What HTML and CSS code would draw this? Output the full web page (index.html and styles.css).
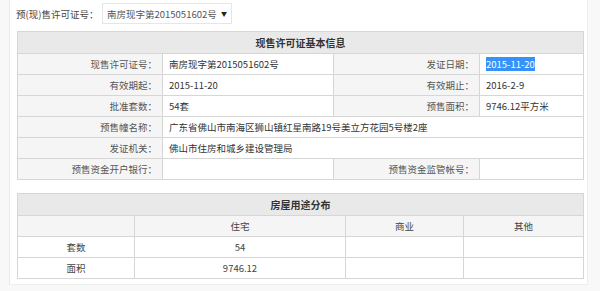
FILE: index.html
```html
<!DOCTYPE html>
<html lang="zh-CN">
<head>
<meta charset="utf-8">
<title>现售许可证基本信息</title>
<link rel="stylesheet" href="styles.css">
</head>
<body>
<div class="card">
  <div class="picker">
    <span class="picker-label">预(现)售许可证号：</span>
    <span class="select"><span class="select-text">南房现字第2015051602号</span><span class="arrow">▼</span></span>
  </div>

  <table class="grid info">
    <colgroup>
      <col class="c1"><col class="c2"><col class="c3"><col class="c4">
    </colgroup>
    <tr class="head"><th colspan="4">现售许可证基本信息</th></tr>
    <tr>
      <td class="lbl">现售许可证号：</td><td class="val">南房现字第2015051602号</td>
      <td class="lbl">发证日期：</td><td class="val"><span class="sel">2015-11-20</span></td>
    </tr>
    <tr>
      <td class="lbl">有效期起：</td><td class="val">2015-11-20</td>
      <td class="lbl">有效期止：</td><td class="val">2016-2-9</td>
    </tr>
    <tr>
      <td class="lbl">批准套数：</td><td class="val">54套</td>
      <td class="lbl">预售面积：</td><td class="val">9746.12平方米</td>
    </tr>
    <tr>
      <td class="lbl">预售幢名称：</td><td class="val" colspan="3">广东省佛山市南海区狮山镇红星南路19号美立方花园5号楼2座</td>
    </tr>
    <tr>
      <td class="lbl">发证机关：</td><td class="val" colspan="3">佛山市住房和城乡建设管理局</td>
    </tr>
    <tr>
      <td class="lbl">预售资金开户银行：</td><td class="val"></td>
      <td class="lbl">预售资金监管帐号：</td><td class="val"></td>
    </tr>
  </table>

  <table class="grid usage">
    <colgroup>
      <col class="u1"><col class="u2"><col class="u3"><col class="u4">
    </colgroup>
    <tr class="head"><th colspan="4">房屋用途分布</th></tr>
    <tr class="sub">
      <td></td><td>住宅</td><td>商业</td><td>其他</td>
    </tr>
    <tr>
      <td>套数</td><td>54</td><td></td><td></td>
    </tr>
    <tr>
      <td>面积</td><td>9746.12</td><td></td><td></td>
    </tr>
  </table>
</div>
</body>
</html>
```

FILE: styles.css
```css
html, body {
  margin: 0;
  padding: 0;
}
body {
  background: #f8f8f8;
  font-family: "Noto Sans CJK SC", "Noto Sans", sans-serif;
  font-size: 9.5px;
  color: #333;
  height: 291px;
  overflow: hidden;
}
.card {
  margin-left: 9px;
  width: 579px;
  height: 285px;
  box-sizing: border-box;
  background: #fff;
  border-left: 1px solid #e9e9e9;
  border-right: 1px solid #eeeeee;
  border-bottom: 1px solid #eeeeee;
  padding: 3px 5px 0 7px;
}
.picker {
  display: flex;
  align-items: center;
  height: 21px;
  margin-bottom: 7px;
  white-space: nowrap;
}
.picker-label {
  color: #444;
  margin-left: -1px;
  width: 86px;
  flex-shrink: 0;
}
.select {
  display: flex;
  align-items: center;
  flex-shrink: 0;
  height: 21px;
  box-sizing: border-box;
  width: 130px;
  border: 1px solid #e6e6e6;
  padding-left: 4px;
  color: #555;
  white-space: nowrap;
}
.select-text {
  flex: 1;
}
.arrow {
  font-size: 6px;
  margin-right: 4px;
  color: #222;
}
.grid {
  border-collapse: collapse;
  table-layout: fixed;
  width: 566px;
}
.grid th,
.grid td {
  border: 1px solid #d6d6d6;
  padding: 0;
  height: 20px;
  line-height: 12px;
  white-space: nowrap;
  overflow: hidden;
}
.grid .head th {
  background: #e9e9e9;
  height: 21px;
  font-size: 10px;
  font-weight: bold;
  color: #333;
  text-align: center;
}
.c1 { width: 145px; }
.c2 { width: 171px; }
.c3 { width: 146px; }
.c4 { width: 104px; }
.info td.lbl {
  background: #f5f5f5;
  text-align: right;
  padding-right: 5px;
  color: #555;
}
.info td.val {
  padding-left: 6px;
  color: #333;
}
.sel {
  background: #3592fb;
  color: #fff;
}
.usage {
  margin-top: 13px;
}
.u1 { width: 117px; }
.u2 { width: 211px; }
.u3 { width: 118px; }
.u4 { width: 120px; }
.usage td {
  text-align: center;
  color: #444;
}
.usage .sub td {
  background: #f5f5f5;
}
```
